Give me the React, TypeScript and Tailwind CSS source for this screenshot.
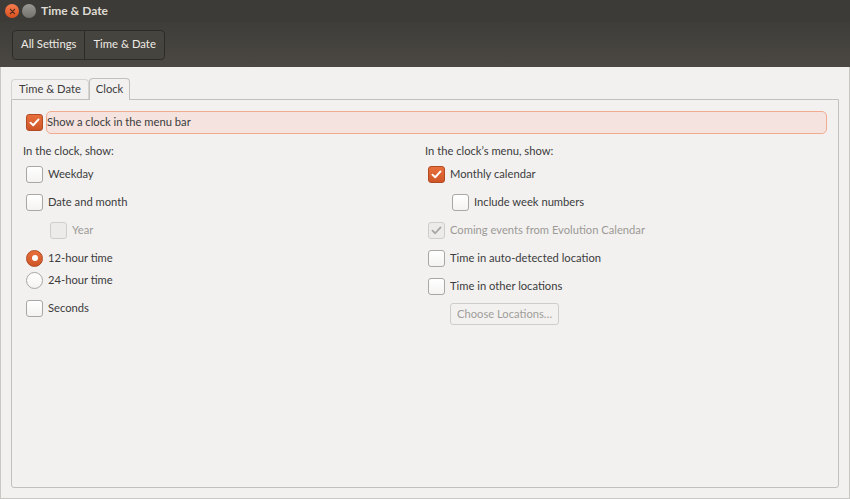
import React from "react";

const font = { fontFamily: 'Lato, "Open Sans", "DejaVu Sans", sans-serif' };

function Check({ checked = false, disabled = false }: { checked?: boolean; disabled?: boolean }) {
  if (checked && !disabled) {
    return (
      <span className="flex h-[17px] w-[17px] shrink-0 items-center justify-center rounded-[3px] border border-[#b04a22] bg-gradient-to-b from-[#e8703c] to-[#cf5526]">
        <svg viewBox="0 0 16 16" className="h-[13px] w-[13px]">
          <path d="M3 8.2 L6.4 11.4 L13 4.2" fill="none" stroke="#fff" strokeWidth="2.4" strokeLinecap="round" strokeLinejoin="round" />
        </svg>
      </span>
    );
  }
  return (
    <span
      className={`flex h-[17px] w-[17px] shrink-0 items-center justify-center rounded-[3px] border ${
        disabled ? "border-[#cfcdca] bg-[#ecebe9]" : "border-[#a9a7a3] bg-gradient-to-b from-white to-[#f4f3f2]"
      }`}
    >
      {checked ? (
        <svg viewBox="0 0 16 16" className="h-[13px] w-[13px]">
          <path d="M3 8.2 L6.4 11.4 L13 4.2" fill="none" stroke="#a8a6a2" strokeWidth="2.2" strokeLinecap="round" strokeLinejoin="round" />
        </svg>
      ) : null}
    </span>
  );
}

function Radio({ checked = false }: { checked?: boolean }) {
  return checked ? (
    <span className="flex h-[17px] w-[17px] shrink-0 items-center justify-center rounded-full border border-[#b04a22] bg-gradient-to-b from-[#e8703c] to-[#cf5526]">
      <span className="h-[6px] w-[6px] rounded-full bg-white" />
    </span>
  ) : (
    <span className="h-[17px] w-[17px] shrink-0 rounded-full border border-[#a9a7a3] bg-gradient-to-b from-white to-[#f4f3f2]" />
  );
}

function Row({
  children,
  label,
  disabled = false,
  className = "",
}: {
  children: React.ReactNode;
  label: string;
  disabled?: boolean;
  className?: string;
}) {
  return (
    <div className={`flex h-[22px] items-center gap-[5px] ${className}`}>
      {children}
      <span className={disabled ? "text-[#9c9a96]" : "text-[#3c3c3c]"}>{label}</span>
    </div>
  );
}

export default function App() {
  return (
    <div className="flex h-[499px] w-[850px] flex-col overflow-hidden bg-[#f2f1f0] text-[11.2px]" style={font}>
      {/* title bar */}
      <div className="flex h-[22px] items-center bg-[#3c3b37] pl-[5px]">
        <span className="flex h-[14px] w-[14px] items-center justify-center rounded-full bg-gradient-to-b from-[#f57d4f] to-[#d94f1b]">
          <svg viewBox="0 0 10 10" className="h-[7px] w-[7px]">
            <path d="M2 2 L8 8 M8 2 L2 8" stroke="#4a2a1c" strokeWidth="1.6" strokeLinecap="round" />
          </svg>
        </span>
        <span className="ml-[3px] h-[14px] w-[14px] rounded-full bg-gradient-to-b from-[#9a9893] to-[#74726d]" />
        <span className="ml-[5px] text-[12px] font-bold text-[#dfdbd2]">Time &amp; Date</span>
      </div>

      {/* toolbar */}
      <div className="flex h-[45px] items-center bg-gradient-to-b from-[#3f3d39] to-[#4b4843] pl-[12px]">
        <div className="flex h-[30px] overflow-hidden rounded-[4px] border border-[#2c2b28] bg-[#46443f] text-[11.3px] text-[#eeebe5]">
          <span className="flex items-center border-r border-[#2c2b28] px-[8px]">All Settings</span>
          <span className="flex items-center px-[8px]">Time &amp; Date</span>
        </div>
      </div>

      {/* content */}
      <div className="flex flex-1 flex-col border border-t-0 border-[#c9c7c3] px-[10px] pb-[10px] pt-[10px]">
        <div className="flex h-[22px] items-end">
          <span className="flex h-[20px] items-center rounded-t-[4px] border border-b-0 border-[#d6d4d0] px-[7px] text-[#3c3c3c]">
            Time &amp; Date
          </span>
          <span className="relative top-[1px] flex h-[22px] items-center rounded-t-[4px] border border-b-0 border-[#c2c0bc] bg-[#f2f1f0] px-[6px] text-[#3c3c3c]">
            Clock
          </span>
        </div>
        <div className="flex flex-1 flex-col rounded-b-[3px] border border-[#c2c0bc] px-[11px] pt-[10px]">
          <div className="flex h-[24px] items-center gap-[3px] pl-[3px]">
            <Check checked />
            <span className="flex h-[23px] flex-1 items-center rounded-[5px] border border-[#f2ab8f] bg-[#f4e3df] text-[#3c3c3c]">
              Show a clock in the menu bar
            </span>
          </div>

          <div className="mt-[9px] grid grid-cols-2">
            <div className="flex flex-col">
              <span className="h-[20px] text-[#3c3c3c]">In the clock, show:</span>
              <div className="flex flex-col gap-[6px] pl-[3px]">
                <Row label="Weekday">
                  <Check />
                </Row>
                <Row label="Date and month">
                  <Check />
                </Row>
                <Row label="Year" disabled className="pl-[24px]">
                  <Check disabled />
                </Row>
                <Row label="12-hour time">
                  <Radio checked />
                </Row>
              </div>
              <div className="flex flex-col pl-[3px]">
                <Row label="24-hour time">
                  <Radio />
                </Row>
                <Row label="Seconds" className="mt-[6px]">
                  <Check />
                </Row>
              </div>
            </div>
            <div className="flex flex-col">
              <span className="h-[20px] text-[#3c3c3c]">In the clock’s menu, show:</span>
              <div className="flex flex-col gap-[6px] pl-[3px]">
                <Row label="Monthly calendar">
                  <Check checked />
                </Row>
                <Row label="Include week numbers" className="pl-[24px]">
                  <Check />
                </Row>
                <Row label="Coming events from Evolution Calendar" disabled>
                  <Check checked disabled />
                </Row>
                <Row label="Time in auto-detected location">
                  <Check />
                </Row>
                <Row label="Time in other locations">
                  <Check />
                </Row>
                <div className="pl-[22px]">
                  <span className="inline-flex h-[22px] items-center rounded-[3px] border border-[#cfcdc9] px-[6px] text-[#a09e9a]">
                    Choose Locations…
                  </span>
                </div>
              </div>
            </div>
          </div>
        </div>
      </div>
    </div>
  );
}
